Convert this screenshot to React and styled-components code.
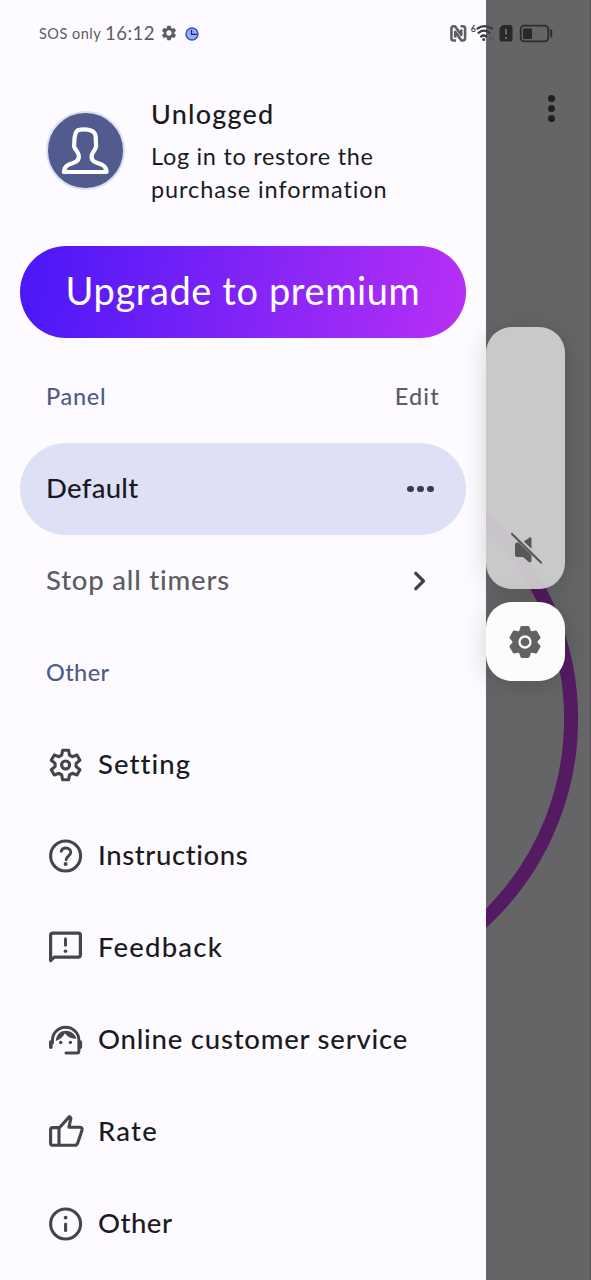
import React from "react";
import styled, { createGlobalStyle } from "styled-components";
import { MdSettings } from "react-icons/md";

const Global = createGlobalStyle`
  * { box-sizing: border-box; }
  body { margin: 0; background: #656567; }
`;

const Screen = styled.div`
  position: relative;
  display: flex;
  width: 591px;
  height: 1280px;
  overflow: hidden;
  font-family: Lato, "Noto Sans", sans-serif;
  color: #1b1b1f;
  white-space: nowrap;
`;

const Drawer = styled.nav`
  display: flex;
  flex-direction: column;
  width: 486px;
  height: 100%;
  padding: 66px 20px 0;
  background: #fdfbff;
`;

const Backdrop = styled.div`
  position: relative;
  flex: 1;
  background: #656567;
  border-right: 1px solid #505052;
  overflow: hidden;
`;

const Ring = styled.svg`
  position: absolute;
  left: 0;
  top: 420px;
`;

const StatusBar = styled.header`
  position: absolute;
  inset: 0 0 auto 0;
  height: 66px;
  padding: 0 38px 0 39px;
  display: flex;
  align-items: center;
  color: #5c5c5f;
`;

const Carrier = styled.span`
  width: 66px;
  font-size: 14.5px;
  letter-spacing: 0.5px;
`;

const Clock = styled.span`
  width: 54.5px;
  font-size: 18.5px;
  letter-spacing: 0.5px;
`;

const SyncIcon = styled.svg`
  margin: 1px 0 0 6.5px;
`;

const StatusIcons = styled.div`
  display: flex;
  align-items: center;
  margin-left: auto;
`;

const Profile = styled.section`
  display: flex;
  height: 180px;
  padding: 32px 26px 0;
`;

const Avatar = styled.div`
  width: 79px;
  height: 79px;
  margin-top: 13px;
  margin-right: 26px;
  border: 2px solid #d9def2;
  border-radius: 50%;
  background: #515b8d;
`;

const ProfileName = styled.div`
  font-size: 27px;
  font-weight: 500;
  line-height: 32px;
  letter-spacing: 1.2px;
`;

const ProfileHint = styled.div`
  margin-top: 10px;
  font-size: 23.5px;
  line-height: 33px;
  letter-spacing: ${(p) => p.$spacing}px;
  & + & { margin-top: 0; }
`;

const Upgrade = styled.button`
  flex: none;
  height: 92px;
  border: 0;
  border-radius: 46px;
  padding: 0 0 4px;
  background: linear-gradient(100deg, #4c18f8 3%, #b52ff5 97%);
  color: #fff;
  font: 400 38px Lato, "Noto Sans", sans-serif;
  letter-spacing: 0.6px;
`;

const Row = styled.div`
  flex: none;
  display: flex;
  align-items: center;
  height: 91.9px;
  padding: 0 26px;
  border-radius: 46px;
  background: ${(p) => (p.$active ? "#dee1f6" : "transparent")};
`;

const List = styled.div`
  margin-top: 13px;
`;

const Label = styled.span`
  flex: 1;
  padding-bottom: 3px;
  font-size: 27.5px;
  font-weight: 500;
  letter-spacing: ${(p) => p.$spacing ?? 0.7}px;
  color: ${(p) => p.$color || "#1b1b1f"};
`;

const Heading = styled(Label)`
  flex: ${(p) => (p.$end ? "none" : 1)};
  padding-bottom: 2px;
  font-size: 23.5px;
`;

const IconSlot = styled.span`
  display: flex;
  width: 40px;
  height: 40px;
  margin-right: 12px;
  color: #46464a;
`;

const VolumeSlider = styled.div`
  position: absolute;
  left: 486px;
  top: 326.5px;
  width: 78.5px;
  height: 262px;
  display: flex;
  align-items: flex-end;
  justify-content: center;
  padding: 0 0 21.5px 1px;
  border-radius: 26px;
  background: rgba(207, 207, 207, 0.94);
  box-shadow: 0 3px 26px rgba(0, 0, 0, 0.16);
`;

const VolumeSettings = styled.div`
  position: absolute;
  left: 486px;
  top: 602px;
  width: 78.5px;
  height: 79px;
  display: flex;
  align-items: center;
  justify-content: center;
  border-radius: 26px;
  background: #fcfcfc;
  color: #626262;
  box-shadow: 0 3px 26px rgba(0, 0, 0, 0.16);
`;

const Overflow = styled.div`
  position: absolute;
  left: 62px;
  top: 95px;
  display: flex;
  flex-direction: column;
  gap: 3px;
`;

const Dot = styled.i`
  width: ${(p) => p.$size}px;
  height: ${(p) => p.$size}px;
  border-radius: 50%;
  background: ${(p) => p.$color};
`;

const Dots = styled.span`
  display: flex;
  gap: 3.4px;
  margin-right: 6.5px;
`;

const Line = ({ children, width = 3.2 }) => (
  <svg width="40" height="40" viewBox="0 0 40 40" fill="none" stroke="currentColor"
    strokeWidth={width} strokeLinecap="round" strokeLinejoin="round">{children}</svg>
);

// Outline of a six-toothed gear: one tooth's corners, turned by 60 degrees each time.
const gearPoints = (cx, cy, tooth) =>
  Array.from({ length: 6 }, (_, k) => {
    const a = (k * Math.PI) / 3;
    return tooth.map(([x, y]) =>
      `${(cx + x * Math.cos(a) - y * Math.sin(a)).toFixed(2)},${(cy + x * Math.sin(a) + y * Math.cos(a)).toFixed(2)}`
    ).join(" ");
  }).join(" ");

const GearIcon = () => (
  <Line width={3.1}>
    <polygon points={gearPoints(19.6, 20, [[-3.9, -9.9], [-3, -14.8], [3, -14.8], [3.9, -9.9]])} />
    <circle cx="19.6" cy="20" r="4" />
  </Line>
);

const SolidGearIcon = () => (
  <Line width={3.6}>
    <polygon fill="currentColor" points={gearPoints(20, 20, [[-4.1, -10.2], [-3, -14.1], [3, -14.1], [4.1, -10.2]])} />
    <circle cx="20" cy="20" r="5.5" stroke="#fcfcfc" strokeWidth="2.3" />
  </Line>
);

const HelpIcon = () => (
  <Line width={3.1}>
    <circle cx="19.6" cy="20" r="15" />
    <path d="M15.2 15.2C16 13 17.8 12 19.8 12c2.8 0 4.9 1.7 4.9 4.2 0 3.6-4.6 4.2-4.6 7.6" strokeWidth="2.9" />
    <circle cx="19.6" cy="28" r="2" fill="currentColor" stroke="none" />
  </Line>
);

const FeedbackIcon = () => (
  <Line>
    <path d="M4.6 32.7V7.2Q4.6 5.1 6.7 5.1H32.3Q34.4 5.1 34.4 7.2V27Q34.4 29.1 32.3 29.1H8.2Z" />
    <path d="M19.5 11v6.3" strokeWidth="2.9" />
    <circle cx="19.5" cy="23.2" r="1.8" fill="currentColor" stroke="none" />
  </Line>
);

const AgentIcon = () => (
  <Line width={3}>
    <path d="M4.8 22v5.3M34.3 22v5.3" strokeWidth="3.6" />
    <path d="M6.4 23v-2.600a13.200 13.200 0 0 1 26.500 0V31a2 2 0 0 1-2 2H20" />
    <path d="M9.8 21c.3-5.800 4.200-10.300 9.700-10.300 5.400 0 9.800 3.400 11 7.900-4.600.6-9.100-1.400-11.600-5.300-1.600 3.600-5.200 6.400-9.100 7.700z" fill="currentColor" stroke="none" />
    <circle cx="14.7" cy="22.4" r="1.7" fill="currentColor" stroke="none" />
    <circle cx="24.4" cy="22.4" r="1.7" fill="currentColor" stroke="none" />
  </Line>
);

const ThumbIcon = () => (
  <Line width={3.1}>
    <path d="M13 16.2 23.4 4.6l1.5 1.5-2 9.2h10.600q3.200 0 2.500 3l-4.300 12.700q-.8 2.300-3 2.300H6.600q-2 0-2-2V17.600q0-2 2-2h6.400M13 16v17" />
  </Line>
);

const InfoIcon = () => (
  <Line width={3.1}>
    <circle cx="19.6" cy="20" r="15" />
    <path d="M19.6 20v6.5" />
    <circle cx="19.6" cy="13.6" r="1.9" fill="currentColor" stroke="none" />
  </Line>
);

const PersonIcon = () => (
  <svg width="75" height="75" viewBox="0 0 75 75" fill="none" stroke="#fff" strokeWidth="4.2" strokeLinejoin="round">
    <path d="M29.8 17.300c5-1.600 14.800-1.200 17.200 3.600 1.300 2.500.6 6.600 1.100 11.700.2 3-3.500 6.600-4.300 9.300-1 4.300 1.200 6.500 5 7.800 4.400 1.400 9.300 2.500 9.800 9.300H15.900c.5-6.800 5.400-7.900 9.800-9.300 3.700-1.200 5.800-3.900 5-7.800-.6-3.300-4.900-6.300-4.600-9.300.6-5.600-.6-12.200 3.700-15.300z" />
  </svg>
);

const items = [
  ["Setting", 1.05, GearIcon],
  ["Instructions", 0.6, HelpIcon],
  ["Feedback", 1.2, FeedbackIcon],
  ["Online customer service", 0.78, AgentIcon],
  ["Rate", 1.2, ThumbIcon],
  ["Other", 0.5, InfoIcon],
];

export default function App() {
  return (
    <Screen>
      <Global />
      <Drawer>
        <Profile>
          <Avatar><PersonIcon /></Avatar>
          <div>
            <ProfileName>Unlogged</ProfileName>
            <ProfileHint $spacing={0.7}>Log in to restore the</ProfileHint>
            <ProfileHint $spacing={0.9}>purchase information</ProfileHint>
          </div>
        </Profile>
        <Upgrade>Upgrade to premium</Upgrade>
        <List>
          <Row>
            <Heading $color="#515b86">Panel</Heading>
            <Heading $end $spacing={1.2} $color="#5c5c66">Edit</Heading>
          </Row>
          <Row $active>
            <Label $spacing={0.3}>Default</Label>
            <Dots>{[0, 1, 2].map((i) => <Dot key={i} $size={6.6} $color="#3c3d4a" />)}</Dots>
          </Row>
          <Row>
            <Label $spacing={0.8} $color="#5c5c66">Stop all timers</Label>
            <svg width="40" height="40" viewBox="0 0 40 40" fill="none" stroke="#3f3f43" strokeWidth="3.2" strokeLinecap="round" strokeLinejoin="round">
              <path d="M15.8 12.3 23.5 20 15.8 27.7" />
            </svg>
          </Row>
          <Row><Heading $spacing={0.4} $color="#515b86">Other</Heading></Row>
          {items.map(([name, spacing, Icon]) => (
            <Row key={name}>
              <IconSlot><Icon /></IconSlot>
              <Label $spacing={spacing}>{name}</Label>
            </Row>
          ))}
        </List>
      </Drawer>
      <Backdrop>
        <Ring width="105" height="600" viewBox="486 420 105 600">
          <circle cx="294.8" cy="719" r="276.3" fill="none" stroke="#541b62" strokeWidth="14" />
        </Ring>
        <Overflow>{[0, 1, 2].map((i) => <Dot key={i} $size={7} $color="#202022" />)}</Overflow>
      </Backdrop>
      <VolumeSlider>
        <svg width="40" height="40" viewBox="0 0 40 40" fill="#575757">
          <path d="M9 17.500q0-2 2-2h1.600L25.500 28V34.500q-1 1.500-3 .2L17 30h-5.500q-2.500 0-2.500-2.500z" />
          <path d="M17.800 14.500 23.500 10.500q2-1 2 1.300v10z" />
          <path d="M6 7 35 35.500" stroke="#575757" strokeWidth="2.2" strokeLinecap="round" />
        </svg>
      </VolumeSlider>
      <VolumeSettings><SolidGearIcon /></VolumeSettings>
      <StatusBar>
        <Carrier>SOS only</Carrier>
        <Clock>16:12</Clock>
        <MdSettings size={18} />
        <SyncIcon width="16" height="16" viewBox="0 0 16 16">
          <circle cx="8" cy="8" r="6" fill="#8db1fb" stroke="#4a48b8" strokeWidth="1.4" />
          <path d="M7.500 4v4.300h5.500" fill="none" stroke="#25257a" strokeWidth="1.3" />
        </SyncIcon>
        <StatusIcons>
          <svg width="103" height="24" viewBox="450 21 103 24" fill="none">
            <g stroke="#5f5f62" strokeWidth="2.6" strokeLinejoin="round">
              <path d="M456 40.500H453.700q-2.300 0-2.300-2.300V28.800q0-2.500 2.300-2.500h1.300L461.300 35V29.500" />
              <path d="M460.500 26.300H462.800q2.300 0 2.300 2.300V38q0 2.500-2.300 2.500h-1.300L455.200 31.800V37.500" />
            </g>
            <text x="470.700" y="31.500" fontSize="9" fontWeight="700" fill="#4b4b4d">6</text>
            <g stroke="#3d3d40" strokeWidth="2.2" strokeLinecap="round">
              <path d="M477.500 28.500q7-4.800 14.500 0M478.500 32.800q5.500-4.400 11 0M481 36.600q2.700-2.200 5.200 0" />
            </g>
            <circle cx="483.700" cy="39.600" r="1.5" fill="#3d3d40" />
            <path d="M490.200 36.500v3.500M493 36.500v3.500" stroke="#525254" />
            <path d="M502.500 25H510q2.500 0 2.500 2.500v11.500q0 2.500-2.500 2.500h-8q-2.500 0-2.500-2.500V28.500z" fill="#29292b" />
            <path d="M506 29v5.500M506 37v2" stroke="#77777a" strokeWidth="1.6" />
            <rect x="520.700" y="25.700" width="27.600" height="15.600" rx="3.5" stroke="#2d2d2f" strokeWidth="1.8" />
            <rect x="523" y="28.500" width="9" height="10.500" rx="1" fill="#29292b" />
            <path d="M551.200 29.500v8" stroke="#2d2d2f" strokeWidth="2" />
          </svg>
        </StatusIcons>
      </StatusBar>
    </Screen>
  );
}
